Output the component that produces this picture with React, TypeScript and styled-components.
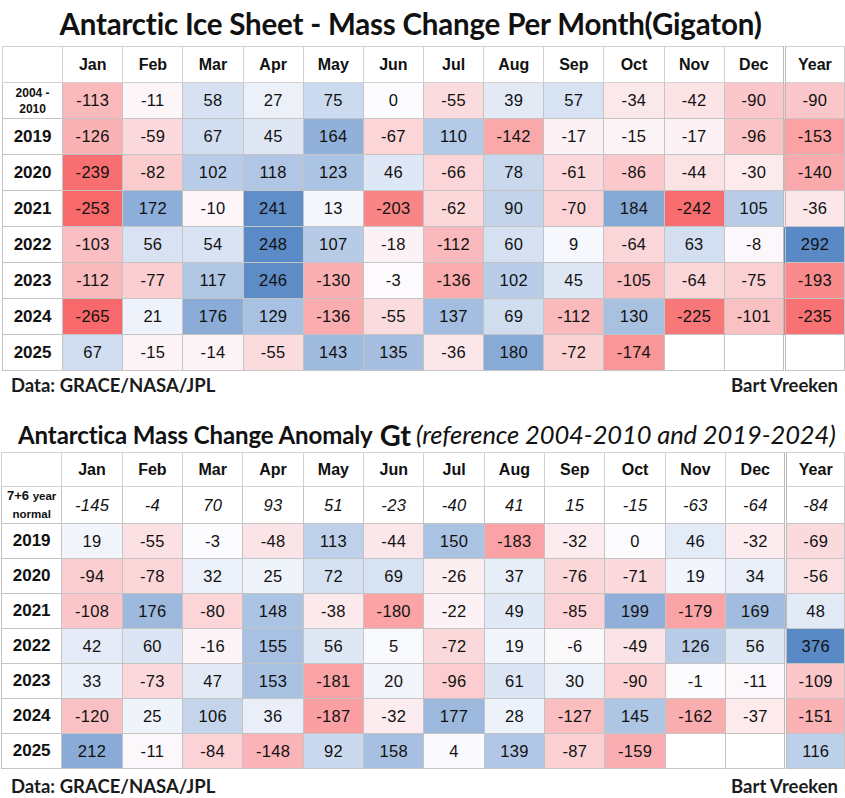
import React from 'react';
import styled, { createGlobalStyle } from 'styled-components';

const GlobalStyle = createGlobalStyle`
  html, body {
    margin: 0;
    padding: 0;
    background: #ffffff;
  }
`;

type Cellv = number | null;

const MONTHS = ['Jan', 'Feb', 'Mar', 'Apr', 'May', 'Jun', 'Jul', 'Aug', 'Sep', 'Oct', 'Nov', 'Dec', 'Year'];

const iceSheetRows: { label: string; small?: boolean; values: Cellv[] }[] = [
  { label: '2004 -\n2010', small: true, values: [-113, -11, 58, 27, 75, 0, -55, 39, 57, -34, -42, -90, -90] },
  { label: '2019', values: [-126, -59, 67, 45, 164, -67, 110, -142, -17, -15, -17, -96, -153] },
  { label: '2020', values: [-239, -82, 102, 118, 123, 46, -66, 78, -61, -86, -44, -30, -140] },
  { label: '2021', values: [-253, 172, -10, 241, 13, -203, -62, 90, -70, 184, -242, 105, -36] },
  { label: '2022', values: [-103, 56, 54, 248, 107, -18, -112, 60, 9, -64, 63, -8, 292] },
  { label: '2023', values: [-112, -77, 117, 246, -130, -3, -136, 102, 45, -105, -64, -75, -193] },
  { label: '2024', values: [-265, 21, 176, 129, -136, -55, 137, 69, -112, 130, -225, -101, -235] },
  { label: '2025', values: [67, -15, -14, -55, 143, 135, -36, 180, -72, -174, null, null, null] },
];

const normalRow: number[] = [-145, -4, 70, 93, 51, -23, -40, 41, 15, -15, -63, -64, -84];

const anomalyRows: { label: string; values: Cellv[] }[] = [
  { label: '2019', values: [19, -55, -3, -48, 113, -44, 150, -183, -32, 0, 46, -32, -69] },
  { label: '2020', values: [-94, -78, 32, 25, 72, 69, -26, 37, -76, -71, 19, 34, -56] },
  { label: '2021', values: [-108, 176, -80, 148, -38, -180, -22, 49, -85, 199, -179, 169, 48] },
  { label: '2022', values: [42, 60, -16, 155, 56, 5, -72, 19, -6, -49, 126, 56, 376] },
  { label: '2023', values: [33, -73, 47, 153, -181, 20, -96, 61, 30, -90, -1, -11, -109] },
  { label: '2024', values: [-120, 25, 106, 36, -187, -32, 177, 28, -127, 145, -162, -37, -151] },
  { label: '2025', values: [212, -11, -84, -148, 92, 158, 4, 139, -87, -159, null, null, 116] },
];

// Excel style red - white - blue scale
const RED = [248, 105, 107];
const WHITE = [252, 252, 255];
const BLUE = [90, 138, 198];

const scaleColor = (v: Cellv, range: number): string => {
  if (v === null) return '#ffffff';
  const t = Math.min(Math.abs(v) / range, 1);
  const end = v < 0 ? RED : BLUE;
  const c = WHITE.map((w, i) => Math.round(w + (end[i] - w) * t));
  return `rgb(${c.join(',')})`;
};

const GRID = '#c4c4c4';
const SHEET_FONT = `'Liberation Sans', Arial, sans-serif`;
const TITLE_FONT = `Lato, 'Open Sans', sans-serif`;

// Layout
const Page = styled.div`
  width: 845px;
  display: flex;
  flex-direction: column;
  color: #111;
`;

const Title = styled.h1`
  margin: 0;
  height: 46px;
  display: flex;
  align-items: center;
  justify-content: center;
  padding-right: 24px;
  font-family: ${TITLE_FONT};
  font-weight: 700;
  font-size: 29.5px;
  letter-spacing: -0.2px;
  color: #111;
`;

const SubTitle = styled.h2`
  margin: 0;
  height: 53px;
  padding: 0 0 3px 18px;
  box-sizing: border-box;
  display: flex;
  align-items: flex-end;
  font-family: ${TITLE_FONT};
  font-weight: 700;
  font-size: 24px;
  letter-spacing: -0.1px;
  color: #111;
  white-space: pre;
`;

const Gt = styled.span`
  font-size: 29px;
  line-height: 1;
  margin-left: 7px;
`;

const Reference = styled.span`
  font-weight: 400;
  font-style: italic;
  font-size: 25.5px;
  margin-left: 5px;
`;

const Table = styled.table<{ $offset: number }>`
  border-collapse: collapse;
  table-layout: fixed;
  margin-left: ${(p) => p.$offset}px;
  font-family: ${SHEET_FONT};
  border: 1px solid ${GRID};
`;

const Col = styled.col<{ $w: number }>`
  width: ${(p) => p.$w}px;
`;

const Row = styled.tr<{ $h: number; $heavy?: boolean }>`
  height: ${(p) => p.$h}px;
  ${(p) => (p.$heavy ? `& > * { border-bottom: 2px solid #bcbcbc; }` : '')}
`;

const HeadCell = styled.th<{ $year?: boolean }>`
  padding: 0;
  font-family: ${SHEET_FONT};
  font-size: 16px;
  font-weight: 700;
  text-align: center;
  vertical-align: middle;
  color: #111;
  background: #ffffff;
  border: 1px solid #d2d2d2;
  border-left: ${(p) => (p.$year ? `3px double #bcbcbc` : `1px solid #d2d2d2`)};
`;

const RowLabel = styled.th<{ $small?: boolean }>`
  padding: 0;
  font-family: ${SHEET_FONT};
  font-size: ${(p) => (p.$small ? 12 : 17)}px;
  line-height: ${(p) => (p.$small ? 16 : 20)}px;
  font-weight: 700;
  text-align: center;
  vertical-align: middle;
  white-space: pre-line;
  color: #111;
  background: #ffffff;
  border: 1px solid ${GRID};
`;

const NormalLabel = styled(RowLabel)`
  line-height: 18px;
  font-size: 13px;
`;

const Unit = styled.span`
  font-size: 11.5px;
`;

const Cell = styled.td<{ $bg: string; $year?: boolean; $italic?: boolean }>`
  padding: 0;
  font-family: ${SHEET_FONT};
  font-size: 16.5px;
  letter-spacing: 0.3px;
  text-align: center;
  vertical-align: middle;
  color: #111;
  font-style: ${(p) => (p.$italic ? 'italic' : 'normal')};
  background: ${(p) => p.$bg};
  border: 1px solid ${GRID};
  border-left: ${(p) => (p.$year ? `3px double #bcbcbc` : `1px solid ${GRID}`)};
`;

const Footer = styled.div<{ $h: number }>`
  height: ${(p) => p.$h}px;
  display: flex;
  align-items: center;
  justify-content: space-between;
  padding: 0 7px 0 11px;
  font-family: ${TITLE_FONT};
  font-weight: 700;
  font-size: 18.5px;
  color: #1b1b1b;
`;

const ColGroup = ({ yearWidth }: { yearWidth: number }) => (
  <colgroup>
    {Array.from({ length: 13 }).map((_, i) => (
      <Col key={i} $w={60} />
    ))}
    <Col $w={yearWidth} />
  </colgroup>
);

const HeaderRow = ({ h }: { h: number }) => (
  <Row $h={h} $heavy>
    <HeadCell />
    {MONTHS.map((m) => (
      <HeadCell key={m} $year={m === 'Year'}>
        {m}
      </HeadCell>
    ))}
  </Row>
);

const DataCells = ({ values, range }: { values: Cellv[]; range: number }) => (
  <>
    {values.map((v, i) => (
      <Cell key={i} $bg={scaleColor(v, range)} $year={i === 12}>
        {v === null ? '' : v}
      </Cell>
    ))}
  </>
);

export default function App() {
  return (
    <Page>
      <GlobalStyle />
      <Title>Antarctic Ice Sheet - Mass Change Per Month(Gigaton)</Title>
      <Table $offset={2}>
        <ColGroup yearWidth={60} />
        <tbody>
          <HeaderRow h={36} />
          {iceSheetRows.map((r, idx) => (
            <Row key={r.label} $h={36} $heavy={idx === 0}>
              <RowLabel $small={r.small}>{r.label}</RowLabel>
              <DataCells values={r.values} range={250} />
            </Row>
          ))}
        </tbody>
      </Table>
      <Footer $h={28}>
        <span>Data: GRACE/NASA/JPL</span>
        <span>Bart Vreeken</span>
      </Footer>

      <SubTitle>
        Antarctica Mass Change Anomaly<Gt>Gt</Gt>
        <Reference>(reference 2004-2010 and 2019-2024)</Reference>
      </SubTitle>
      <Table $offset={1}>
        <ColGroup yearWidth={58} />
        <tbody>
          <HeaderRow h={34} />
          <Row $h={37} $heavy>
            <NormalLabel>
              7+6 <Unit>year</Unit>
              {'\n'}
              <Unit>normal</Unit>
            </NormalLabel>
            {normalRow.map((v, i) => (
              <Cell key={i} $bg="#ffffff" $italic $year={i === 12}>
                {v}
              </Cell>
            ))}
          </Row>
          {anomalyRows.map((r) => (
            <Row key={r.label} $h={35}>
              <RowLabel>{r.label}</RowLabel>
              <DataCells values={r.values} range={300} />
            </Row>
          ))}
        </tbody>
      </Table>
      <Footer $h={33}>
        <span>Data: GRACE/NASA/JPL</span>
        <span>Bart Vreeken</span>
      </Footer>
    </Page>
  );
}
